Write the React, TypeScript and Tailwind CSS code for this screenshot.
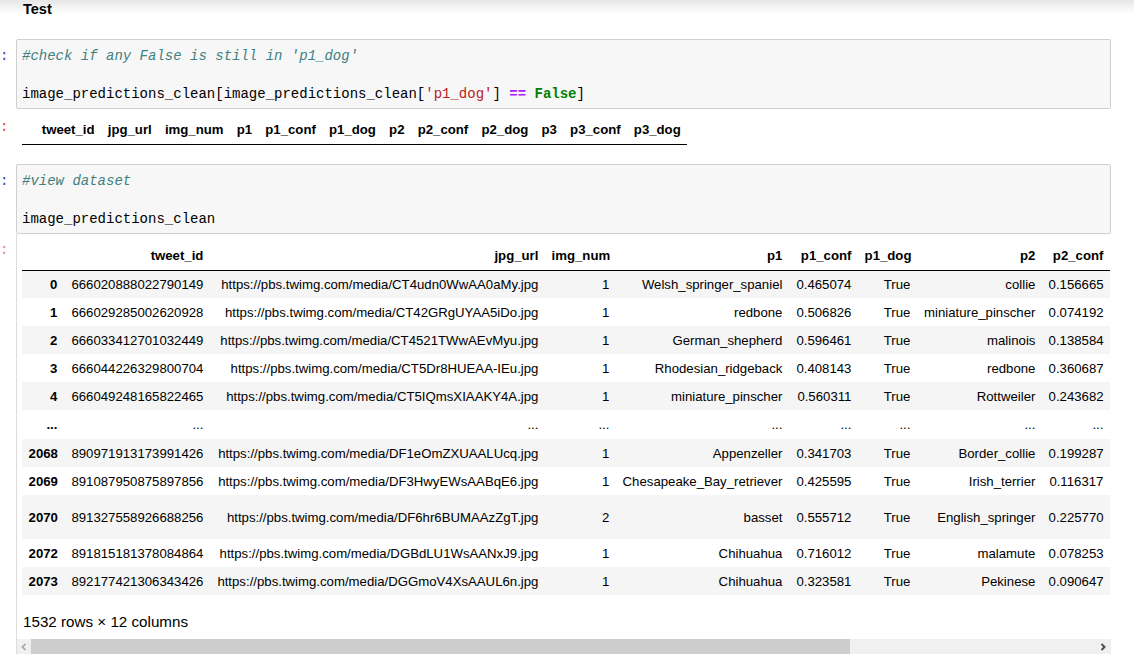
import React from 'react'

const mono = "font-['Liberation_Mono','DejaVu_Sans_Mono',monospace] text-[14px] leading-[19px]"

const emptyCols = ['', 'tweet_id', 'jpg_url', 'img_num', 'p1', 'p1_conf', 'p1_dog', 'p2', 'p2_conf', 'p2_dog', 'p3', 'p3_conf', 'p3_dog']

const headers = ['', 'tweet_id', 'jpg_url', 'img_num', 'p1', 'p1_conf', 'p1_dog', 'p2', 'p2_conf']
const widths = ['w-[42px]', 'w-[146px]', 'w-[335px]', 'w-[71px]', 'w-[173px]', 'w-[69px]', 'w-[59px]', 'w-[125px]', 'w-[68px]']

type Row = { cells: string[]; h: string }

const rows: Row[] = [
  { cells: ['0', '666020888022790149', 'https://pbs.twimg.com/media/CT4udn0WwAA0aMy.jpg', '1', 'Welsh_springer_spaniel', '0.465074', 'True', 'collie', '0.156665'], h: 'h-[28px]' },
  { cells: ['1', '666029285002620928', 'https://pbs.twimg.com/media/CT42GRgUYAA5iDo.jpg', '1', 'redbone', '0.506826', 'True', 'miniature_pinscher', '0.074192'], h: 'h-[28px]' },
  { cells: ['2', '666033412701032449', 'https://pbs.twimg.com/media/CT4521TWwAEvMyu.jpg', '1', 'German_shepherd', '0.596461', 'True', 'malinois', '0.138584'], h: 'h-[28px]' },
  { cells: ['3', '666044226329800704', 'https://pbs.twimg.com/media/CT5Dr8HUEAA-IEu.jpg', '1', 'Rhodesian_ridgeback', '0.408143', 'True', 'redbone', '0.360687'], h: 'h-[28px]' },
  { cells: ['4', '666049248165822465', 'https://pbs.twimg.com/media/CT5IQmsXIAAKY4A.jpg', '1', 'miniature_pinscher', '0.560311', 'True', 'Rottweiler', '0.243682'], h: 'h-[28px]' },
  { cells: ['...', '...', '...', '...', '...', '...', '...', '...', '...'], h: 'h-[29px]' },
  { cells: ['2068', '890971913173991426', 'https://pbs.twimg.com/media/DF1eOmZXUAALUcq.jpg', '1', 'Appenzeller', '0.341703', 'True', 'Border_collie', '0.199287'], h: 'h-[28px]' },
  { cells: ['2069', '891087950875897856', 'https://pbs.twimg.com/media/DF3HwyEWsAABqE6.jpg', '1', 'Chesapeake_Bay_retriever', '0.425595', 'True', 'Irish_terrier', '0.116317'], h: 'h-[28px]' },
  { cells: ['2070', '891327558926688256', 'https://pbs.twimg.com/media/DF6hr6BUMAAzZgT.jpg', '2', 'basset', '0.555712', 'True', 'English_springer', '0.225770'], h: 'h-[44px]' },
  { cells: ['2072', '891815181378084864', 'https://pbs.twimg.com/media/DGBdLU1WsAANxJ9.jpg', '1', 'Chihuahua', '0.716012', 'True', 'malamute', '0.078253'], h: 'h-[28px]' },
  { cells: ['2073', '892177421306343426', 'https://pbs.twimg.com/media/DGGmoV4XsAAUL6n.jpg', '1', 'Chihuahua', '0.323581', 'True', 'Pekinese', '0.090647'], h: 'h-[28px]' },
]

function InPrompt() {
  return <div className={`w-[16px] shrink-0 pt-[8px] text-[#303F9F] ${mono}`}>:</div>
}

function CodeBox({ children }: { children: React.ReactNode }) {
  return (
    <div className={`h-[70px] w-[1095px] rounded-[2px] border border-[#cfcfcf] bg-[#f7f7f7] pl-[5px] pt-[7px] text-black ${mono}`}>
      {children}
    </div>
  )
}

export default function App() {
  return (
    <div className="relative min-h-[669px] w-full overflow-hidden bg-white font-['Liberation_Sans',Arial,sans-serif] text-black">
      <div className="pointer-events-none absolute inset-x-0 top-0 h-[14px] bg-linear-to-b from-black/10 to-transparent" />

      <div className="h-[39px] pl-[23px] pt-[1px]">
        <div className="text-[14.5px] font-bold leading-[17px]">Test</div>
      </div>

      {/* cell 1 */}
      <div className="flex">
        <InPrompt />
        <CodeBox>
          <div className="italic text-[#408080]">#check if any False is still in 'p1_dog'</div>
          <div>&nbsp;</div>
          <div className="whitespace-pre">
            image_predictions_clean[image_predictions_clean[<span className="text-[#BA2121]">'p1_dog'</span>]{' '}
            <span className="font-bold text-[#AA22FF]">==</span> <span className="font-bold text-[#008000]">False</span>]
          </div>
        </CodeBox>
      </div>

      {/* output 1 */}
      <div className="flex h-[55px]">
        <div className={`w-[16px] shrink-0 pt-[9px] text-[#D84315] ${mono}`}>:</div>
        <div className="pl-[6px] pt-[7px]">
          <table className="text-[13.2px]">
            <thead>
              <tr className="h-[28px]">
                {emptyCols.map((c, i) => (
                  <th key={i} className="border-b border-black px-[6.6px] text-right font-bold leading-[15px]">
                    {c}
                  </th>
                ))}
              </tr>
            </thead>
          </table>
        </div>
      </div>

      {/* cell 2 */}
      <div className="flex">
        <InPrompt />
        <CodeBox>
          <div className="italic text-[#408080]">#view dataset</div>
          <div>&nbsp;</div>
          <div>image_predictions_clean</div>
        </CodeBox>
      </div>

      {/* output 2 */}
      <div className="flex">
        <div className={`w-[16px] shrink-0 pt-[7px] text-[#e0886a] ${mono}`}>:</div>
        <div className="w-[1095px] border-l border-[#dcdcdc]">
          <div className="overflow-hidden pl-[5px] pt-[8px]">
            <table className="w-[1088px] table-fixed text-[13.2px] leading-[15px]">
              <thead>
                <tr className="h-[28px]">
                  {headers.map((h, i) => (
                    <th key={i} className={`${widths[i]} border-b border-black px-[6.6px] text-right font-bold`}>
                      {h}
                    </th>
                  ))}
                </tr>
              </thead>
              <tbody>
                {rows.map((r, ri) => (
                  <tr key={ri} className={`${r.h} ${ri % 2 === 0 ? 'bg-[#f5f5f5]' : 'bg-white'}`}>
                    {r.cells.map((c, ci) =>
                      ci === 0 ? (
                        <th key={ci} className="px-[6.6px] text-right align-middle font-bold">
                          {c}
                        </th>
                      ) : (
                        <td key={ci} className="whitespace-nowrap px-[6.6px] text-right align-middle">
                          {c}
                        </td>
                      )
                    )}
                  </tr>
                ))}
              </tbody>
            </table>
          </div>

          <div className="pl-[6px] pt-[18px] text-[15.2px] leading-[17px]">1532 rows × 12 columns</div>

          <div className="mt-[9px] flex h-[15px] bg-[#f0f0f0]">
            <div className="flex w-[14px] items-center justify-center">
              <svg width="6" height="8" viewBox="0 0 6 8">
                <path d="M4.5 1 L1.5 4 L4.5 7" fill="none" stroke="#a3a3a3" strokeWidth="1.6" />
              </svg>
            </div>
            <div className="w-[819px] bg-[#cdcdcd]" />
            <div className="flex-1" />
            <div className="flex w-[16px] items-center justify-center">
              <svg width="6" height="8" viewBox="0 0 6 8">
                <path d="M1.5 1 L4.5 4 L1.5 7" fill="none" stroke="#505050" strokeWidth="2" />
              </svg>
            </div>
          </div>
        </div>
      </div>
    </div>
  )
}
